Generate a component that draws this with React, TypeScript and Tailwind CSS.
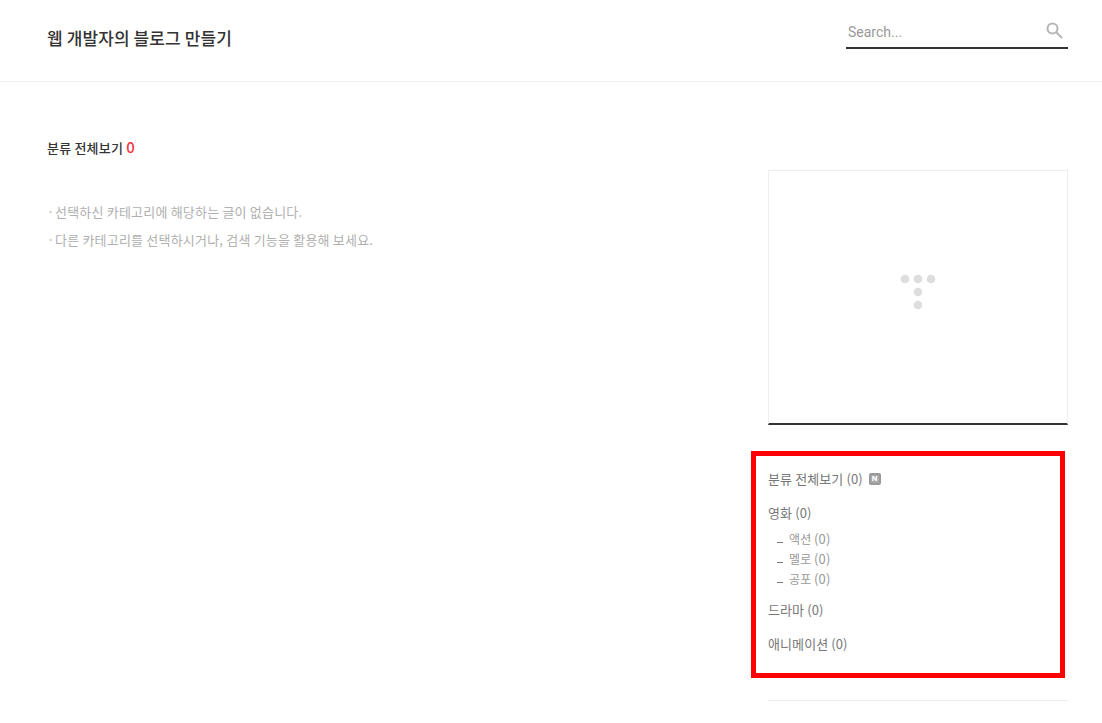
function SubItem({ label }: { label: string }) {
  return (
    <li className="flex h-5 items-center text-[12px] tracking-[0.1px] text-[#999]">
      <span className="ml-[9px] mr-[6px] mt-[6px] h-px w-[6px] bg-[#777]" />
      <span>
        {label} <span className="text-[13px]">(0)</span>
      </span>
    </li>
  );
}

function Notice({ text }: { text: string }) {
  return (
    <li className="flex">
      <span className="w-[8px]">·</span>
      <span>{text}</span>
    </li>
  );
}

export default function App() {
  return (
    <div className="min-h-[723px] overflow-hidden bg-white font-['Noto_Sans_CJK_KR','Noto_Sans',sans-serif]">
      <header className="flex h-[82px] items-center justify-between border-b border-[#eeeeee] pl-[47px] pr-[34px]">
        <h1 className="-mt-[6px] text-[17px] font-medium tracking-[0.1px] text-[#333]">웹 개발자의 블로그 만들기</h1>
        <div className="mt-[-16px] flex h-[33px] w-[222px] items-center justify-between border-b-2 border-[#333] pl-[2px] pr-[5px] pt-[2px] font-['Roboto',sans-serif]">
          <span className="text-[14px] text-[#999]">Search...</span>
          <svg width="17" height="17" viewBox="0 0 17 17" fill="none" stroke="#b5b5b5" strokeWidth="2" className="mb-[4px]">
            <circle cx="6.5" cy="6.5" r="5" />
            <path d="M10.5 10.5 L16 16" />
          </svg>
        </div>
      </header>

      <main className="flex justify-between pl-[47px] pr-[34px]">
        <section className="pt-[55px]">
          <h2 className="text-[13px] font-medium leading-5 tracking-[0.2px] text-[#333]">
            분류 전체보기 <span className="text-[15px] text-[#f5343f]">0</span>
          </h2>
          <ul className="mt-[40px] text-[13px] leading-7 tracking-[0.2px] text-[#b0b0b0]">
            <Notice text="선택하신 카테고리에 해당하는 글이 없습니다." />
            <Notice text="다른 카테고리를 선택하시거나, 검색 기능을 활용해 보세요." />
          </ul>
        </section>

        <aside className="w-[300px] pt-[88px]">
          <div className="flex h-[255px] justify-center border border-b-2 border-[#eeeeee] border-b-[#333] pt-[103px]">
            <svg width="36" height="36" viewBox="0 0 36 36" fill="#dedede">
              <circle cx="5" cy="5" r="4.3" />
              <circle cx="18" cy="5" r="4.3" />
              <circle cx="31" cy="5" r="4.3" />
              <circle cx="18" cy="18" r="4.3" />
              <circle cx="18" cy="31" r="4.3" />
            </svg>
          </div>

          <nav className="relative mt-[26px] h-[227px] pt-[18px] text-[13px] tracking-[0.1px] text-[#777]">
            <div className="absolute -left-[17px] right-[3px] top-0 bottom-0 border-[5px] border-[#ff0000]" />
            <div className="flex h-5 items-center">
              분류 전체보기 (0)
              <span className="ml-[6px] flex h-[12px] w-[12px] items-center justify-center rounded-[2px] border-2 border-[#999] bg-[#aaa] font-['Roboto',sans-serif] text-[8px] font-bold leading-none text-white">
                N
              </span>
            </div>
            <div className="mt-[14px] flex h-5 items-center">영화 (0)</div>
            <ul className="mt-[6px]">
              <SubItem label="액션" />
              <SubItem label="멜로" />
              <SubItem label="공포" />
            </ul>
            <div className="mt-[11px] flex h-5 items-center">드라마 (0)</div>
            <div className="mt-[14px] flex h-5 items-center">애니메이션 (0)</div>
          </nav>

          <div className="mt-[22px] border-t border-[#eeeeee]" />
        </aside>
      </main>
    </div>
  );
}
